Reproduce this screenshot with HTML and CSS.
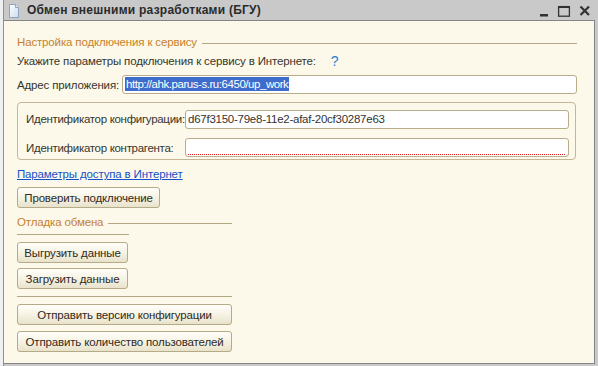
FILE: index.html
```html
<!DOCTYPE html>
<html lang="ru">
<head>
    <meta charset="UTF-8">
    <title>Обмен внешними разработками (БГУ)</title>
    <link rel="stylesheet" href="styles.css">
</head>
<body>
    <div class="desk">
        <div class="edge"></div>
        <div class="window">
            <div class="titlebar">
                <svg class="doc-icon" width="10" height="14" viewBox="0 0 10 14">
                    <defs>
                        <linearGradient id="docfill" x1="0" y1="0" x2="1" y2="1">
                            <stop offset="0" stop-color="#ffffff"/>
                            <stop offset="1" stop-color="#c9dcef"/>
                        </linearGradient>
                    </defs>
                    <path d="M0.5 0.5 H6.5 L9.5 3.5 V13.5 H0.5 Z" fill="url(#docfill)" stroke="#8da4bd"/>
                    <path d="M6.5 0.5 V3.5 H9.5" fill="#e6eef7" stroke="#8da4bd"/>
                </svg>
                <span class="title">Обмен внешними разработками (БГУ)</span>
                <svg class="win-controls" width="52" height="14" viewBox="0 0 52 14">
                    <rect x="1" y="10" width="8" height="2.5" fill="#333"/>
                    <rect x="19" y="2" width="12" height="2" fill="#333"/>
                    <rect x="19.6" y="2.6" width="10.8" height="9.6" fill="none" stroke="#333" stroke-width="1.3"/>
                    <path d="M41.5 2.5 L50 11 M50 2.5 L41.5 11" stroke="#333" stroke-width="2.2"/>
                </svg>
            </div>
            <div class="client">
                <div class="section-head wide">
                    <span>Настройка подключения к сервису</span>
                    <span class="rule"></span>
                </div>
                <div class="hint">
                    <span>Укажите параметры подключения к сервису в Интернете:</span>
                    <span class="help">?</span>
                </div>
                <div class="address">
                    <span class="label">Адрес приложения:</span>
                    <div class="field"><span class="selected">http://ahk.parus-s.ru:6450/up_work</span></div>
                </div>
                <div class="group">
                    <span class="label">Идентификатор конфигурации:</span>
                    <div class="field">d67f3150-79e8-11e2-afaf-20cf30287e63</div>
                    <span class="label">Идентификатор контрагента:</span>
                    <div class="field required"></div>
                </div>
                <a class="link" href="#">Параметры доступа в Интернет</a>
                <button class="btn btn-check">Проверить подключение</button>
                <div class="section-head narrow">
                    <span>Отладка обмена</span>
                    <span class="rule"></span>
                </div>
                <div class="sep short"></div>
                <button class="btn btn-small first">Выгрузить данные</button>
                <button class="btn btn-small">Загрузить данные</button>
                <div class="sep long"></div>
                <button class="btn btn-wide first">Отправить версию конфигурации</button>
                <button class="btn btn-wide">Отправить количество пользователей</button>
            </div>
        </div>
    </div>
</body>
</html>
```

FILE: styles.css
```css
* {
    margin: 0;
    padding: 0;
    box-sizing: border-box;
}
body {
    width: 598px;
    height: 366px;
    overflow: hidden;
    background-color: #c9c9c9;
    font-family: Arial, "Liberation Sans", sans-serif;
    font-size: 11.5px;
    letter-spacing: -0.15px;
    color: #35352d;
}
.desk {
    display: flex;
    height: 366px;
}
.edge {
    width: 4px;
    background-color: #eef0f2;
    border-right: 1px solid #8f8f8f;
}
.window {
    flex: 1;
    display: flex;
    flex-direction: column;
    padding-right: 3px;
    padding-bottom: 2px;
}
.titlebar {
    height: 20px;
    display: flex;
    align-items: center;
    padding-left: 5px;
    padding-right: 4px;
}
.doc-icon {
    margin-right: 8px;
    margin-top: 1px;
}
.title {
    font-weight: bold;
    font-size: 12px;
    color: #2b2b2b;
    letter-spacing: 0.25px;
}
.win-controls {
    margin-left: auto;
    margin-top: 2px;
}
.client {
    flex: 1;
    display: flex;
    flex-direction: column;
    align-items: flex-start;
    background-color: #fcf9ea;
    border: 1px solid #858585;
    border-left: none;
    padding: 14px 17px 0 13px;
    white-space: nowrap;
}
.section-head {
    display: flex;
    align-items: center;
    height: 14px;
    line-height: 14px;
    color: #c7812a;
}
.section-head .rule {
    flex: 1;
    border-top: 1px solid #b2a886;
    margin-left: 5px;
    margin-top: 2px;
}
.section-head.wide {
    width: 560px;
}
.section-head.narrow {
    width: 215px;
    margin-top: 7px;
}
.hint {
    display: flex;
    align-items: center;
    height: 14px;
    margin-top: 5px;
    line-height: 14px;
}
.help {
    color: #2a80d2;
    font-size: 14px;
    margin-left: 15px;
}
.address {
    display: flex;
    align-items: center;
    width: 560px;
    margin-top: 7px;
}
.address .label {
    width: 105px;
}
.field {
    flex: 1;
    height: 19px;
    line-height: 17px;
    background-color: #fff;
    border: 1px solid #b8ad8b;
    border-radius: 3px;
    padding-left: 2px;
    color: #333;
    letter-spacing: -0.25px;
    white-space: nowrap;
    overflow: hidden;
}
.selected {
    background-color: #3d6ccc;
    color: #fff;
    padding: 1px 1px;
    letter-spacing: -0.45px;
}
.group {
    display: grid;
    grid-template-columns: 159px 384px;
    row-gap: 6px;
    align-items: center;
    width: 559px;
    height: 58px;
    margin-top: 8px;
    padding: 5px 6px 0 8px;
    border: 1px solid #c2b797;
    border-radius: 4px;
}
.group .label {
    letter-spacing: -0.3px;
}
.required {
    background-image: repeating-linear-gradient(to right, #e02020 0 1px, transparent 1px 2px);
    background-repeat: no-repeat;
    background-size: calc(100% - 4px) 1px;
    background-position: 2px 15px;
}
.link {
    margin-top: 7px;
    height: 14px;
    line-height: 14px;
    color: #1450c8;
    text-decoration: underline;
}
.btn {
    height: 21px;
    font-family: Arial, "Liberation Sans", sans-serif;
    font-size: 11.5px;
    letter-spacing: -0.15px;
    color: #302a1c;
    background: linear-gradient(#fffef9, #f4f0e0 60%, #e8e2cb);
    border: 1px solid #b5ab89;
    border-radius: 3px;
    text-align: center;
    white-space: nowrap;
}
.btn-check {
    width: 143px;
    margin-top: 6px;
}
.btn-small {
    width: 111px;
    margin-top: 5px;
}
.btn-wide {
    width: 215px;
    margin-top: 6px;
}
.btn.first {
    margin-top: 7px;
}
.sep {
    border-top: 1px solid #b2a886;
}
.sep.short {
    width: 112px;
    margin-top: 5px;
}
.sep.long {
    width: 215px;
    margin-top: 7px;
}
```
